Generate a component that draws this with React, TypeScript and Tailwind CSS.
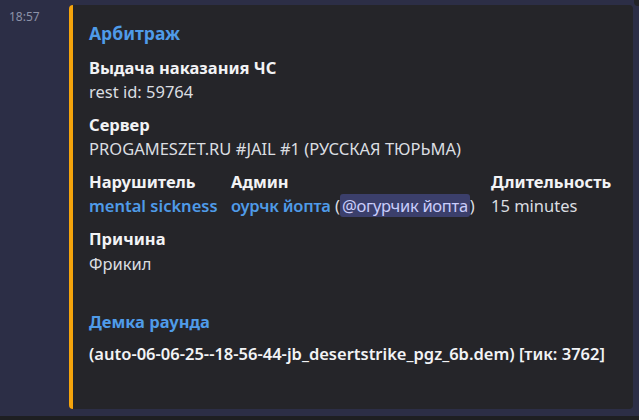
export default function App() {
  return (
    <div className="flex h-[420px] w-[639px] flex-col overflow-hidden bg-[#2c2e46] font-['Noto_Sans',sans-serif]">
      <div className="flex h-[416px]">
        <div className="w-[69px] shrink-0 pl-[9px] pt-[9px] text-[12px] leading-[16px] text-[#8d92a8]">18:57</div>
        <div className="mt-[5px] h-[404px] w-[564px] shrink-0 rounded-[4px] border-l-4 border-[#f5a40c] bg-[#252529] pl-[16px] pr-4 pt-[16px]">
          <div className="text-[17.5px] font-bold leading-[24px] text-[#4f9be8]">Арбитраж</div>

          <Field name="Выдача наказания ЧС" className="mt-[12px]">rest id: 59764</Field>
          <Field name="Сервер" className="mt-[11px]">PROGAMESZET.RU #JAIL #1 (РУССКАЯ ТЮРЬМА)</Field>

          <div className="mt-[11px] flex">
            <Field name="Нарушитель" className="w-[142px]">
              <span className="font-semibold text-[#4f9be8]">mental sickness</span>
            </Field>
            <Field name="Админ" className="w-[260px]">
              <span className="font-semibold tracking-[-0.2px] text-[#4f9be8]">оурчк йопта</span>
              {" ("}
              <span className="rounded-[3px] bg-[#3b3f6b] px-[2px] tracking-[-0.3px] text-[#c9cdfb]">@огурчик йопта</span>
              {")"}
            </Field>
            <Field name="Длительность">15 minutes</Field>
          </div>

          <Field name="Причина" className="mt-[11px]" valueClassName="mt-[3px]">Фрикил</Field>

          <div className="mt-[36px] text-[16.5px] font-bold leading-[22px] text-[#4f9be8]">Демка раунда</div>
          <div className="mt-[10px] text-[16.5px] font-semibold leading-[22px] text-[#f2f3f5]">
            (auto-06-06-25--18-56-44-jb_desertstrike_pgz_6b.dem) [тик: 3762]
          </div>
        </div>
        <div className="ml-[1px] h-[6px] w-[6px] rounded-bl-[4px] bg-[#232428]" />
      </div>
      <div className="h-[4px] bg-[#1e1f22]" />
    </div>
  );
}

function Field({
  name,
  children,
  className = "",
  valueClassName = "mt-[2px]",
}: {
  name: string;
  children: React.ReactNode;
  className?: string;
  valueClassName?: string;
}) {
  return (
    <div className={className}>
      <div className="text-[16.5px] font-bold leading-[22px] text-[#f2f3f5]">{name}</div>
      <div className={`${valueClassName} text-[16.5px] leading-[22px] text-[#dbdee1]`}>{children}</div>
    </div>
  );
}
